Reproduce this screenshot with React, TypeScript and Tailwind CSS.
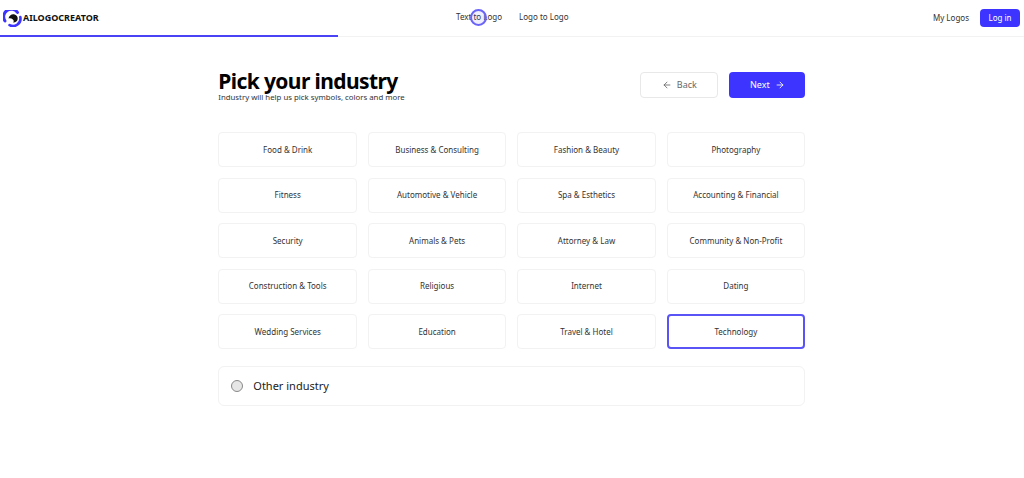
import { ArrowLeft, ArrowRight } from "lucide-react";

const industries = [
  "Food & Drink",
  "Business & Consulting",
  "Fashion & Beauty",
  "Photography",
  "Fitness",
  "Automotive & Vehicle",
  "Spa & Esthetics",
  "Accounting & Financial",
  "Security",
  "Animals & Pets",
  "Attorney & Law",
  "Community & Non-Profit",
  "Construction & Tools",
  "Religious",
  "Internet",
  "Dating",
  "Wedding Services",
  "Education",
  "Travel & Hotel",
  "Technology",
];

function Logo() {
  return (
    <svg width="19" height="17" viewBox="0 0 19 17" className="shrink-0">
      <path d="M2 11A7.500 7.500 0 0 1 14.500 2.500" fill="none" stroke="#3d35ff" strokeWidth="3" strokeLinecap="round" />
      <path d="M17.300 7A7.500 7.500 0 0 1 6.500 15.200" fill="none" stroke="#3d35ff" strokeWidth="2.600" strokeLinecap="round" />
      <path d="M5.500 8.500C6 5.500 8.500 3.800 11 4.200c2.500.5 4 2.500 3.700 4.800-.3 2.300-2.200 3.800-4.700 3.600 1-1 .9-2.300-.1-3.200-1.200-1-2.900-1.200-4.400-.9z" fill="#111" />
    </svg>
  );
}

export default function App() {
  return (
    <div className="min-h-[478px] bg-white font-['Noto_Sans',sans-serif] text-[#1a1a1a]">
      <header className="relative flex h-[37px] items-center justify-between border-b border-[#f2f2f2] pl-[3px] pr-[4px]">
        <div className="flex items-center gap-[1px]">
          <Logo />
          <span className="text-[9px] font-bold text-[#111]">AILOGOCREATOR</span>
        </div>
        <nav className="absolute left-[456px] top-[10px] flex gap-[17px] text-[8px] leading-[14px] text-[#333]">
          <span>Text to Logo</span>
          <span>Logo to Logo</span>
        </nav>
        <div className="flex items-center gap-[11px]">
          <span className="text-[8px] text-[#333]">My Logos</span>
          <button className="flex h-[18px] w-[40px] items-center justify-center rounded-[4px] bg-[#3d35ff] text-[8px] text-white">
            Log in
          </button>
        </div>
        <div className="absolute bottom-[-1px] left-0 h-[2px] w-[338px] bg-[#4a43f5]" />
        <div className="absolute left-[470px] top-[9px] h-[17px] w-[17px] rounded-full border-[2px] border-[#6a64f8] bg-[#6a64f8]/10" />
      </header>

      <main className="ml-[218.3px] w-[587px] pt-[35px]">
        <div className="flex items-start justify-between">
          <div>
            <h1 className="text-[21px] font-bold leading-[19px] tracking-[-0.6px] text-black">Pick your industry</h1>
            <p className="pt-[1px] text-[7.8px] leading-[10px] text-[#333]">Industry will help us pick symbols, colors and more</p>
          </div>
          <div className="flex gap-[11px]">
            <button className="flex h-[26px] w-[78px] items-center justify-center gap-[5px] rounded-[4px] border border-[#e8e8e8] text-[9px] text-[#666]">
              <ArrowLeft size={10} />
              Back
            </button>
            <button className="flex h-[26px] w-[76px] items-center justify-center gap-[5px] rounded-[4px] bg-[#3d35ff] text-[9px] text-white">
              Next
              <ArrowRight size={10} />
            </button>
          </div>
        </div>

        <div className="mt-[30px] grid grid-cols-4 gap-x-[10.67px] gap-y-[10.5px]">
          {industries.map((name) => (
            <div
              key={name}
              className={
                name === "Technology"
                  ? "flex h-[35px] items-center justify-center rounded-[4px] border-2 border-[#5a54f7] text-[8px] text-[#333]"
                  : "flex h-[35px] items-center justify-center rounded-[4px] border border-[#f2f2f2] text-[8px] text-[#333]"
              }
            >
              {name}
            </div>
          ))}
        </div>

        <div className="mt-[17px] flex h-[40px] items-center gap-[10px] rounded-[6px] border border-[#f2f2f2] pl-[12px]">
          <div className="h-[12px] w-[12px] rounded-full border border-[#888] bg-[#e6e6e6]" />
          <span className="text-[11px] text-[#222]">Other industry</span>
        </div>
      </main>
    </div>
  );
}
